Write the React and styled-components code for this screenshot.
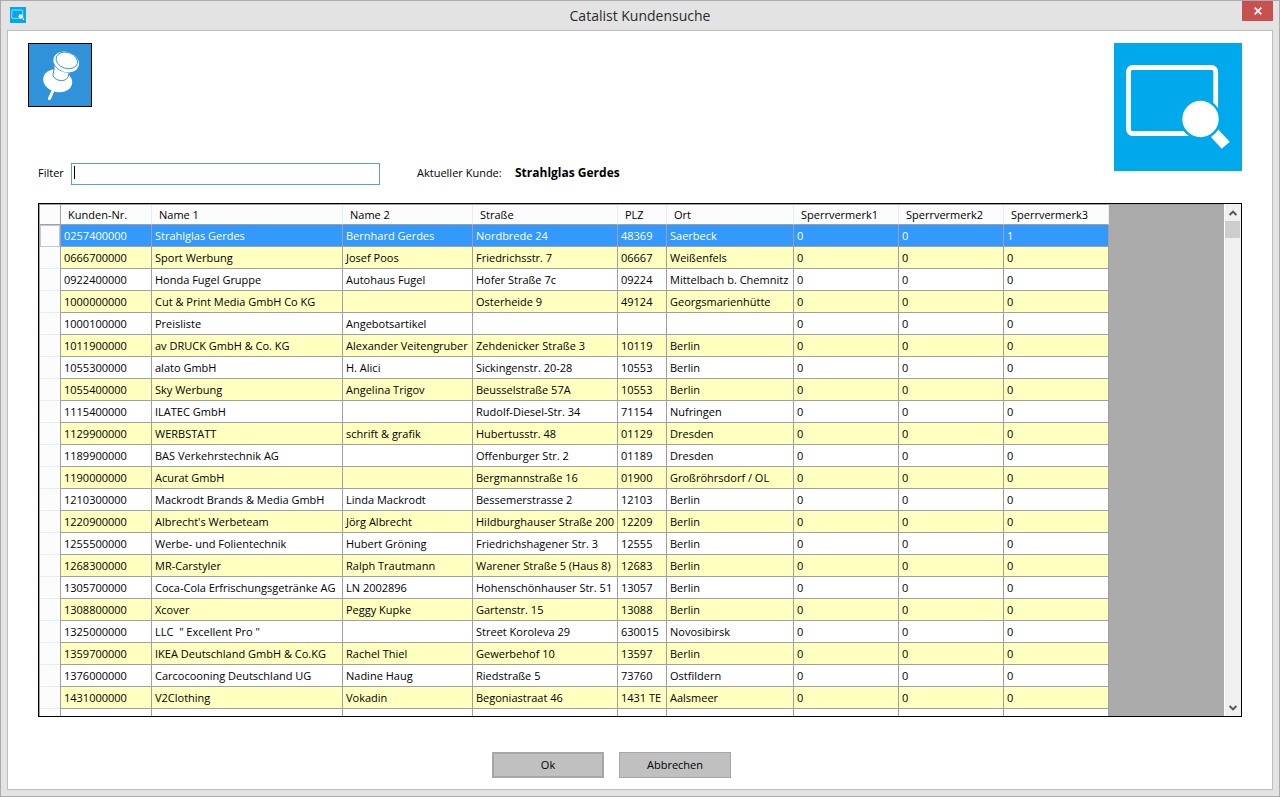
import React from "react";
import styled, { createGlobalStyle, keyframes } from "styled-components";

const GlobalStyle = createGlobalStyle`
  * { box-sizing: border-box; }
  body {
    margin: 0;
    font-family: "Open Sans", "Noto Sans", sans-serif;
    font-size: 11px;
    line-height: 16px;
    color: #000;
  }
  button, input { font: inherit; color: inherit; }
`;

const Window = styled.div`
  display: flex;
  flex-direction: column;
  height: 100vh;
  padding: 0 6px 6px;
  border: 1px solid #ababab;
  background: #e3e3e3;
`;

const TitleBar = styled.header`
  display: grid;
  grid-template-columns: 1fr auto 1fr;
  align-items: start;
  height: 29px;
  flex: none;
`;

const AppIcon = styled.svg`
  width: 16px;
  height: 16px;
  margin: 6px 3px;
`;

const Title = styled.h1`
  margin: 0;
  font-size: 14px;
  font-weight: 400;
  line-height: 29px;
  color: #2b2b2b;
`;

const CloseButton = styled.button`
  display: flex;
  align-items: center;
  justify-content: center;
  justify-self: end;
  width: 31px;
  height: 20px;
  padding: 0;
  border: 0;
  background: #c75050;
`;

const Panel = styled.main`
  display: flex;
  flex-direction: column;
  flex: 1;
  min-height: 0;
  padding: 12px 30px 11px 20px;
  border: 1px solid #bebebe;
  background: #fff;
`;

const Top = styled.div`
  display: flex;
  justify-content: space-between;
  align-items: flex-start;
  flex: none;
`;

const PinButton = styled.button`
  display: block;
  width: 64px;
  height: 64px;
  padding: 0;
  border: 1px solid #000;
  background: #3092d9;
`;

const PinDrawing = styled.svg`
  display: block;
  width: 62px;
  height: 62px;
`;

const Logo = styled.svg`
  width: 128px;
  height: 128px;
`;

const FilterRow = styled.div`
  display: flex;
  align-items: center;
  height: 22px;
  margin: 56px 0 0 10px;
`;

const FilterLabel = styled.label`
  width: 33px;
  padding-bottom: 2px;
`;

const FilterField = styled.div`
  position: relative;
  display: flex;
`;

const FilterInput = styled.input`
  width: 309px;
  height: 22px;
  padding: 0 2px;
  border: 1px solid #569de5;
  outline: none;
  background: #fff;
  caret-color: transparent;
`;

const Caret = styled.span`
  position: absolute;
  top: 3px;
  left: 3px;
  width: 1px;
  height: 13px;
  background: #000;
  pointer-events: none;

  input:not(:placeholder-shown) + & {
    display: none;
  }
`;

const CurrentLabel = styled.span`
  width: 98px;
  margin-left: 37px;
  padding-bottom: 2px;
`;

const CurrentCustomer = styled.strong`
  padding-bottom: 2px;
  font-size: 12px;
  font-weight: 700;
`;

const GridBox = styled.div`
  display: flex;
  flex: 1;
  min-height: 0;
  margin: 18px 0 0 10px;
  border: 1px solid #000;
  background: #ababab;
`;

const TableView = styled.div`
  flex: 1;
  min-width: 0;
  overflow: hidden;
  border-top: 1px solid #a0a0a0;
  border-left: 1px solid #a0a0a0;
`;

const Table = styled.table`
  table-layout: fixed;
  width: 1069px;
  border-collapse: separate;
  border-spacing: 0;
`;

const HeadCell = styled.th`
  height: 20px;
  padding: 0 7px;
  overflow: hidden;
  border-right: 1px solid ${(p) => (p.$corner ? "#a0a0a0" : "#e3edfb")};
  border-bottom: 1px solid #a0a0a0;
  background: #fcfcfd;
  font-weight: 400;
  text-align: left;
  white-space: nowrap;
`;

const RowHead = styled.th`
  height: 22px;
  padding: 0;
  border-right: 1px solid #a0a0a0;
  background: #fcfcfd;
  box-shadow: ${(p) => (p.$current ? "inset 0 0 0 1px #bccadf" : "inset 0 -1px #e3edfb")};
`;

const Row = styled.tr`
  background: ${(p) => (p.$selected ? "#3399ff" : p.$alt ? "#ffffc0" : "#fff")};
  color: ${(p) => (p.$selected ? "#fff" : "#000")};
`;

const Cell = styled.td`
  height: 22px;
  padding: 0 0 0 3px;
  overflow: hidden;
  border-right: 1px solid #a0a0a0;
  border-bottom: 1px solid #a0a0a0;
  white-space: pre;
`;

const ScrollBar = styled.div`
  display: flex;
  flex-direction: column;
  flex: none;
  width: 17px;
  padding-right: 1px;
  border-left: 1px solid #fff;
  background: #f0f0f0;
`;

const ScrollButton = styled.button`
  display: flex;
  align-items: center;
  justify-content: center;
  height: 17px;
  padding: 0;
  border: 0;
  background: transparent;
`;

const ScrollTrack = styled.div`
  flex: 1;
`;

const ScrollThumb = styled.div`
  height: 17px;
  background: #cdcdcd;
`;

const Actions = styled.footer`
  display: flex;
  justify-content: center;
  gap: 15px;
  flex: none;
  margin-top: 35px;
  padding-right: 47px;
`;

const ActionButton = styled.button`
  width: 112px;
  height: 26px;
  padding: 0;
  border: ${(p) => (p.$primary ? 2 : 1)}px solid #a6a6a6;
  background: #c0c0c0;
`;

const widths = [21, 91, 191, 130, 145, 49, 127, 105, 105, 105];

const headings = ["Kunden-Nr.", "Name 1", "Name 2", "Straße", "PLZ", "Ort", "Sperrvermerk1", "Sperrvermerk2", "Sperrvermerk3"];

const customers = [
  ["0257400000", "Strahlglas Gerdes", "Bernhard Gerdes", "Nordbrede 24", "48369", "Saerbeck", "0", "0", "1"],
  ["0666700000", "Sport Werbung", "Josef Poos", "Friedrichsstr. 7", "06667", "Weißenfels", "0", "0", "0"],
  ["0922400000", "Honda Fugel Gruppe", "Autohaus Fugel", "Hofer Straße 7c", "09224", "Mittelbach b. Chemnitz", "0", "0", "0"],
  ["1000000000", "Cut & Print Media GmbH Co KG", "", "Osterheide 9", "49124", "Georgsmarienhütte", "0", "0", "0"],
  ["1000100000", "Preisliste", "Angebotsartikel", "", "", "", "0", "0", "0"],
  ["1011900000", "av DRUCK GmbH & Co. KG", "Alexander Veitengruber", "Zehdenicker Straße 3", "10119", "Berlin", "0", "0", "0"],
  ["1055300000", "alato GmbH", "H. Alici", "Sickingenstr. 20-28", "10553", "Berlin", "0", "0", "0"],
  ["1055400000", "Sky Werbung", "Angelina Trigov", "Beusselstraße 57A", "10553", "Berlin", "0", "0", "0"],
  ["1115400000", "ILATEC GmbH", "", "Rudolf-Diesel-Str. 34", "71154", "Nufringen", "0", "0", "0"],
  ["1129900000", "WERBSTATT", "schrift & grafik", "Hubertusstr. 48", "01129", "Dresden", "0", "0", "0"],
  ["1189900000", "BAS Verkehrstechnik AG", "", "Offenburger Str. 2", "01189", "Dresden", "0", "0", "0"],
  ["1190000000", "Acurat GmbH", "", "Bergmannstraße 16", "01900", "Großröhrsdorf / OL", "0", "0", "0"],
  ["1210300000", "Mackrodt Brands & Media GmbH", "Linda Mackrodt", "Bessemerstrasse 2", "12103", "Berlin", "0", "0", "0"],
  ["1220900000", "Albrecht's Werbeteam", "Jörg Albrecht", "Hildburghauser Straße 200", "12209", "Berlin", "0", "0", "0"],
  ["1255500000", "Werbe- und Folientechnik", "Hubert Gröning", "Friedrichshagener Str. 3", "12555", "Berlin", "0", "0", "0"],
  ["1268300000", "MR-Carstyler", "Ralph Trautmann", "Warener Straße 5 (Haus 8)", "12683", "Berlin", "0", "0", "0"],
  ["1305700000", "Coca-Cola Erfrischungsgetränke AG", "LN 2002896", "Hohenschönhauser Str. 51", "13057", "Berlin", "0", "0", "0"],
  ["1308800000", "Xcover", "Peggy Kupke", "Gartenstr. 15", "13088", "Berlin", "0", "0", "0"],
  ["1325000000", "LLC  \" Excellent Pro \"", "", "Street Koroleva 29", "630015", "Novosibirsk", "0", "0", "0"],
  ["1359700000", "IKEA Deutschland GmbH & Co.KG", "Rachel Thiel", "Gewerbehof 10", "13597", "Berlin", "0", "0", "0"],
  ["1376000000", "Carcocooning Deutschland UG", "Nadine Haug", "Riedstraße 5", "73760", "Ostfildern", "0", "0", "0"],
  ["1431000000", "V2Clothing", "Vokadin", "Begoniastraat 46", "1431 TE", "Aalsmeer", "0", "0", "0"],
  ["", "", "", "", "", "", "", "", ""],
];

const SearchMark = () => (
  <>
    <rect width="128" height="128" fill="#00a8ec" />
    <rect x="14.5" y="24.5" width="87.2" height="66" rx="4" fill="none" stroke="#fff" strokeWidth="4.8" />
    <path d="M104 86.3 115.7 98.7 107.7 105.7 97 94Z" fill="#fff" />
    <circle cx="86.5" cy="76" r="20.6" fill="#00a8ec" />
    <circle cx="86.5" cy="76" r="18.2" fill="#fff" />
  </>
);

const PinIcon = () => (
  <PinDrawing viewBox="1 1 62 62" aria-hidden="true">
    <path d="M24.6 48.5 21.4 55.7" stroke="#fff" strokeWidth="3" strokeLinecap="round" />
    <ellipse cx="29.7" cy="37.8" rx="14.7" ry="11.2" transform="rotate(14 29.7 37.8)" fill="#fff" />
    <path d="M27 22 24.9 32.3C26 35.5 29.5 37.6 33.5 37.6 36.8 37.6 39.3 36 40.2 33.5L42.5 27Z" fill="#fff" />
    <path d="M26.2 25.5 24.9 32.3C26 35.5 29.5 37.6 33.5 37.6 36.8 37.6 39.3 36 40.2 33.5L41 29.8" fill="none" stroke="#3092d9" strokeWidth="1" />
    <ellipse cx="38.2" cy="19" rx="13.6" ry="10.5" transform="rotate(20 38.2 19)" fill="#3092d9" />
    <ellipse cx="38.2" cy="19" rx="13.1" ry="10" transform="rotate(20 38.2 19)" fill="#fff" />
    <ellipse cx="38.8" cy="17.4" rx="11" ry="8" transform="rotate(18 38.8 17.4)" fill="none" stroke="#3092d9" strokeWidth="0.9" />
  </PinDrawing>
);

export default function App() {
  return (
    <>
      <GlobalStyle />
      <Window>
        <TitleBar>
          <AppIcon viewBox="0 0 128 128" aria-hidden="true"><SearchMark /></AppIcon>
          <Title>Catalist Kundensuche</Title>
          <CloseButton aria-label="Schließen">
            <svg width="8" height="8" viewBox="0 0 8 8"><path d="M0.7 0.7 7.3 7.3M7.3 0.7 0.7 7.3" stroke="#fff" strokeWidth="1.7" /></svg>
          </CloseButton>
        </TitleBar>
        <Panel>
          <Top>
            <div>
              <PinButton aria-label="Anheften"><PinIcon /></PinButton>
              <FilterRow>
                <FilterLabel htmlFor="filter">Filter</FilterLabel>
                <FilterField>
                  <FilterInput id="filter" type="text" placeholder=" " autoFocus />
                  <Caret />
                </FilterField>
                <CurrentLabel>Aktueller Kunde:</CurrentLabel>
                <CurrentCustomer>Strahlglas Gerdes</CurrentCustomer>
              </FilterRow>
            </div>
            <Logo viewBox="0 0 128 128" role="img" aria-label="Catalist"><SearchMark /></Logo>
          </Top>
          <GridBox>
            <TableView>
              <Table>
                <colgroup>{widths.map((w, i) => <col key={i} width={w} />)}</colgroup>
                <thead>
                  <tr>
                    <HeadCell $corner />
                    {headings.map((h) => <HeadCell key={h} scope="col">{h}</HeadCell>)}
                  </tr>
                </thead>
                <tbody>
                  {customers.map((customer, r) => (
                    <Row key={r} $selected={r === 0} $alt={r % 2 === 1}>
                      <RowHead scope="row" $current={r === 0} />
                      {customer.map((value, c) => <Cell key={c}>{value}</Cell>)}
                    </Row>
                  ))}
                </tbody>
              </Table>
            </TableView>
            <ScrollBar>
              <ScrollButton aria-label="Nach oben">
                <svg width="8" height="6" viewBox="0 0 8 6"><path d="M0.6 5 4 1.6 7.4 5" fill="none" stroke="#555" strokeWidth="2" /></svg>
              </ScrollButton>
              <ScrollTrack><ScrollThumb /></ScrollTrack>
              <ScrollButton aria-label="Nach unten">
                <svg width="8" height="6" viewBox="0 0 8 6"><path d="M0.6 1 4 4.4 7.4 1" fill="none" stroke="#555" strokeWidth="2" /></svg>
              </ScrollButton>
            </ScrollBar>
          </GridBox>
          <Actions>
            <ActionButton $primary>Ok</ActionButton>
            <ActionButton>Abbrechen</ActionButton>
          </Actions>
        </Panel>
      </Window>
    </>
  );
}
